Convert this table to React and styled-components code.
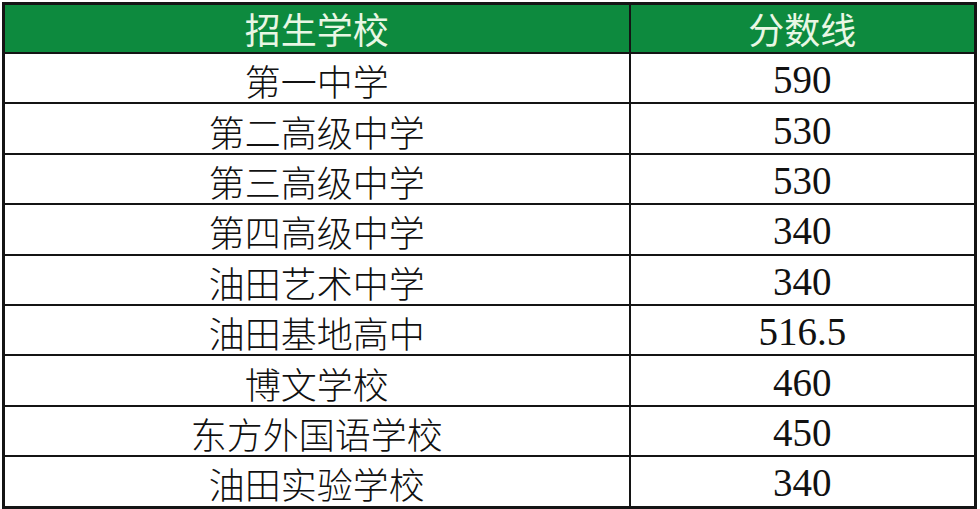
import React from "react";
import styled, { createGlobalStyle } from "styled-components";

const Global = createGlobalStyle`
  html, body { margin: 0; padding: 0; background: #fff; }
  body { font-family: "Noto Sans CJK SC", "Noto Sans", sans-serif; }
`;

const Wrap = styled.div` padding: 2px 0 0 2px; width: 980px; height: 509px; box-sizing: border-box; overflow: hidden; `;
const Table = styled.table`
  width: 975px; border-collapse: collapse; table-layout: fixed;
  border: 3px solid #141414;
`;
const Th = styled.th`
  height: 47px; padding: 0; background: #0d8a3e; color: #e9f7e4;
  font-family: "Noto Sans CJK SC", sans-serif; font-weight: 400; font-size: 36px;
  line-height: 47px; text-align: center; border: 2px solid #141414;
`;
const Td = styled.td`
  height: 44.4px; padding: 4px 0 0; text-align: center; color: #111;
  border: 2px solid #141414; line-height: 44px;
  font-family: ${({ num }) => (num ? '"Liberation Serif", serif' : '"Noto Sans CJK SC", sans-serif')};
  font-weight: ${({ num }) => (num ? 400 : 300)};
  font-size: ${({ num }) => (num ? "39px" : "36px")};
`;

const rows = [
  ["第一中学", "590"],
  ["第二高级中学", "530"],
  ["第三高级中学", "530"],
  ["第四高级中学", "340"],
  ["油田艺术中学", "340"],
  ["油田基地高中", "516.5"],
  ["博文学校", "460"],
  ["东方外国语学校", "450"],
  ["油田实验学校", "340"],
];

export default function App() {
  return (
    <Wrap>
      <Global />
      <Table>
        <colgroup>
          <col style={{ width: 626 }} />
          <col />
        </colgroup>
        <thead>
          <tr><Th>招生学校</Th><Th>分数线</Th></tr>
        </thead>
        <tbody>
          {rows.map(([school, score]) => (
            <tr key={school}>
              <Td>{school}</Td>
              <Td num>{score}</Td>
            </tr>
          ))}
        </tbody>
      </Table>
    </Wrap>
  );
}
